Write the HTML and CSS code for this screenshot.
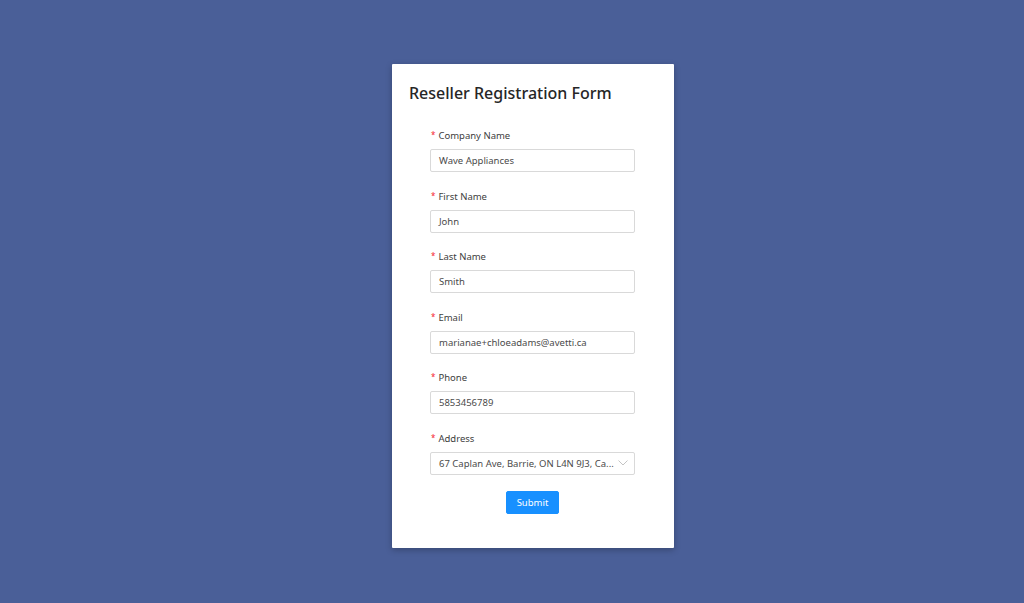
FILE: index.html
```html
<!DOCTYPE html>
<html lang="en">
<head>
<meta charset="utf-8">
<title>Reseller Registration Form</title>
<link rel="stylesheet" href="styles.css">
</head>
<body>
<div class="page">
  <div class="card">
    <h1 class="title">Reseller Registration Form</h1>
    <form class="form">
      <div class="item">
        <label class="label"><span class="req">*</span>Company Name</label>
        <div class="input">Wave Appliances</div>
      </div>
      <div class="item">
        <label class="label"><span class="req">*</span>First Name</label>
        <div class="input">John</div>
      </div>
      <div class="item">
        <label class="label"><span class="req">*</span>Last Name</label>
        <div class="input">Smith</div>
      </div>
      <div class="item">
        <label class="label"><span class="req">*</span>Email</label>
        <div class="input">marianae+chloeadams@avetti.ca</div>
      </div>
      <div class="item">
        <label class="label"><span class="req">*</span>Phone</label>
        <div class="input">5853456789</div>
      </div>
      <div class="item">
        <label class="label"><span class="req">*</span>Address</label>
        <div class="input select"><span class="sel-text">67 Caplan Ave, Barrie, ON L4N 9J3, Ca...</span>
          <svg class="arrow" width="10" height="6" viewBox="0 0 10 6"><path d="M0.5 0.5 L5 5 L9.5 0.5" fill="none" stroke="#c4c4c4" stroke-width="1"/></svg>
        </div>
      </div>
      <div class="actions">
        <button type="button" class="btn">Submit</button>
      </div>
    </form>
  </div>
</div>
</body>
</html>
```

FILE: styles.css
```css
html, body {
  margin: 0;
  padding: 0;
  height: 100%;
}
body {
  background: #4a5f98;
  font-family: "Noto Sans", "Open Sans", sans-serif;
}
.page {
  display: flex;
  justify-content: center;
  padding-top: 64px;
  padding-left: 42px;
}
.card {
  width: 282px;
  box-sizing: border-box;
  background: #fff;
  padding: 17px 17px 34px 17px;
  box-shadow: 0 2px 6px rgba(0,0,0,0.25);
  border-radius: 1px;
}
.title {
  margin: 0;
  font-size: 16px;
  font-weight: 500;
  line-height: 24px;
  color: #262626;
}
.form {
  width: 205px;
  margin: 21px 0 0 21px;
}
.item {
  margin-bottom: 14.5px;
}
.label {
  display: block;
  font-size: 9.5px;
  line-height: 18px;
  padding-top: 1px;
  color: #404040;
  margin-bottom: 4px;
  margin-left: 1px;
}
.req {
  color: #f5222d;
  margin-right: 3px;
  font-size: 8px;
  position: relative;
  top: -1px;
}
.input {
  height: 23px;
  box-sizing: border-box;
  border: 1px solid #d9d9d9;
  border-radius: 2px;
  padding: 0 8px;
  font-size: 9.5px;
  line-height: 21px;
  color: #4a4a4a;
  white-space: nowrap;
  overflow: hidden;
}
.select {
  display: flex;
  align-items: center;
  justify-content: space-between;
  gap: 4px;
}
.sel-text {
  white-space: nowrap;
}
.arrow {
  flex: none;
  margin-right: 1px;
}
.actions {
  display: flex;
  justify-content: center;
  padding-top: 2px;
}
.btn {
  background: #1890ff;
  color: #fff;
  border: 1px solid #1890ff;
  border-radius: 2px;
  font-family: inherit;
  font-size: 9.5px;
  height: 23px;
  width: 53px;
  padding: 0;
  cursor: pointer;
}
```
